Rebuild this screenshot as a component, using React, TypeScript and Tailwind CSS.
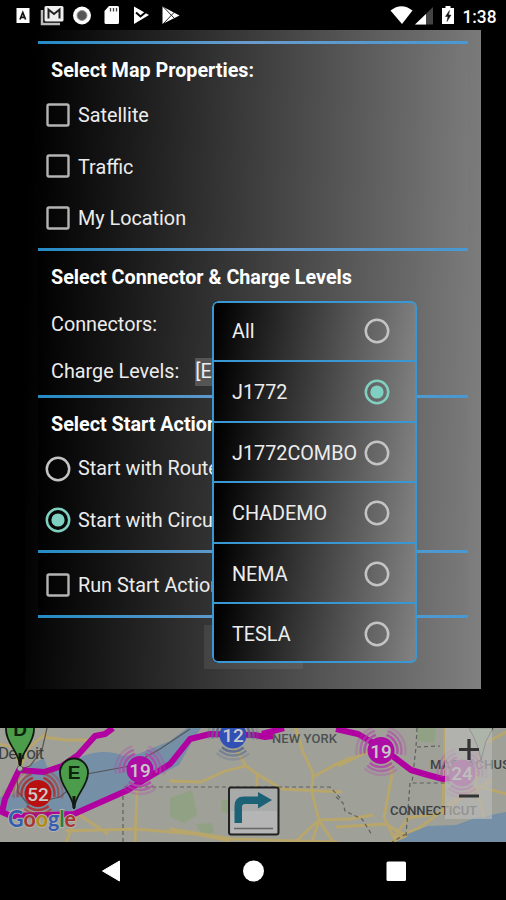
import { useState } from "react";
import type { ReactNode } from "react";

const connectors = ["All", "J1772", "J1772COMBO", "CHADEMO", "NEMA", "TESLA"];

function StatusBar() {
  return (
    <div className="flex h-[30px] shrink-0 bg-black">
      <svg width="506" height="30" viewBox="0 0 506 30">
        <rect x="16.500" y="8" width="13" height="15" fill="#fff" />
        <path d="M20 19.500l2.800-7 2.800 7M21.200 17.300h3.200" fill="none" stroke="#111" strokeWidth="1.700" />
        <path d="M42 10v14h18" fill="none" stroke="#bbb" strokeWidth="2.500" />
        <rect x="44.500" y="6" width="19" height="15.500" rx="1.500" fill="#eee" />
        <path d="M48.500 18.500V9.500l5.500 4.500 5.500-4.500v9" fill="none" stroke="#222" strokeWidth="2" />
        <circle cx="82" cy="15.500" r="9" fill="#fff" />
        <circle cx="82" cy="15.500" r="5" fill="#555" stroke="#999" />
        <path d="M109 6h8.500a1.500 1.500 0 0 1 1.500 1.500v15a1.500 1.500 0 0 1-1.500 1.500h-11.500a1.500 1.500 0 0 1-1.500-1.500V11z" fill="#fff" />
        <path d="M110.500 8v3.500M113.500 8v3.500M116.500 8v3.500" stroke="#444" strokeWidth="1.300" />
        <path d="M134 6.500l15 8.500-15 9z" fill="#fff" />
        <path d="M136 12.500l4.500 4L149 9.500" fill="none" stroke="#000" strokeWidth="2" />
        <path d="M162.500 6.500L179.500 15.500l-17 8.500z" fill="#fff" />
        <path d="M163 6.500l11.500 12M163 24l11.500-12" stroke="#222" strokeWidth="1" />
        <path d="M390.500 10.500q11-8.500 22 0L402 24z" fill="#fff" />
        <path d="M433 7v17.500h-18z" fill="#444" />
        <path d="M426 14v10.500h-11z" fill="#fff" />
        <path d="M445.500 6h5v2h3.500v16h-12V8h3.500z" fill="#fff" />
        <path d="M449.500 10.500l-4 6h2.500l-1 5 4-6.500h-2.500z" fill="#111" stroke="#111" strokeWidth=".5" />
        <text x="462.500" y="22.500" fill="#fff" fontFamily="Roboto" fontWeight="500" fontSize="19" textLength="34" lengthAdjust="spacingAndGlyphs">1:38</text>
      </svg>
    </div>
  );
}

function Divider() {
  return <div className="h-[3px] shrink-0 bg-[linear-gradient(90deg,#258bc5,#6a9bcb_50%,#4798d2)]" />;
}

function Radio({ on }: { on: boolean }) {
  return (
    <svg width="26" height="26" viewBox="0 0 26 26" className="shrink-0">
      <circle cx="13" cy="13" r="11.200" fill="none" stroke={on ? "#7fd0c0" : "#c4c4c4"} strokeWidth="2.500" />
      {on && <circle cx="13" cy="13" r="6.600" fill="#7fd0c0" />}
    </svg>
  );
}

function Check({ label }: { label: string }) {
  const [on, setOn] = useState(false);
  return (
    <button type="button" onClick={() => setOn(!on)} className="flex h-[51.500px] items-center pl-2 text-left">
      <svg width="24" height="24" viewBox="0 0 24 24" className="shrink-0">
        <rect x="1.500" y="1.500" width="21" height="21" rx="1.500" fill={on ? "#7fd0c0" : "none"} stroke="#b4b4b4" strokeWidth="2.400" />
      </svg>
      <span className="mt-[3px] ml-2 whitespace-nowrap">{label}</span>
    </button>
  );
}

function Section({ className, children }: { className: string; children?: ReactNode }) {
  return <div className={`flex shrink-0 flex-col bg-[linear-gradient(92deg,#000,#7a7a7a)] ${className}`}>{children}</div>;
}

function Title({ children }: { children: ReactNode }) {
  return <h2 className="pl-[13px] text-[19.750px] leading-6 font-bold text-white">{children}</h2>;
}

function ConnectorMenu({ value, onPick }: { value: string; onPick: (v: string) => void }) {
  return (
    <div className="absolute top-[271px] left-[187px] flex h-[362px] w-[205px] flex-col overflow-hidden rounded-[6px] after:pointer-events-none after:absolute after:inset-0 after:rounded-[6px] after:border-[2px] after:border-[#3998d3]">
      {connectors.map((c) => (
        <button
          key={c}
          type="button"
          onClick={() => onPick(c)}
          className="flex h-[60.500px] shrink-0 items-center justify-between border-b-[2px] border-[#3998d3] bg-[linear-gradient(100deg,#000_3%,#808080_97%)] pt-px pr-[27px] pl-5 whitespace-nowrap first:h-[61.250px] last:border-transparent"
        >
          <span className="mt-[2px]">{c}</span>
          <Radio on={value === c} />
        </button>
      ))}
    </div>
  );
}

type ClusterProps = { x: number; y: number; n: number; fill: string; ring: string };

function Cluster({ x, y, n, fill, ring }: ClusterProps) {
  return (
    <g>
      {[16.500, 20.500, 24.500].map((r, i) => (
        <circle
          key={r}
          cx={x}
          cy={y}
          r={r}
          fill="none"
          stroke={ring}
          strokeWidth="2.400"
          strokeOpacity={0.9 - i * 0.3}
          strokeDasharray="23 10.333"
          strokeDashoffset="-13.700"
          pathLength="100"
        />
      ))}
      <circle cx={x} cy={y} r="13.500" fill={fill} />
      <text x={x} y={y + 7} textAnchor="middle" fontSize="19" fontWeight="500" fill="#c8c8c8">{n}</text>
    </g>
  );
}

function Pin({ x, y, label }: { x: number; y: number; label: string }) {
  return (
    <g transform={`translate(${x} ${y})`}>
      <path d="M0 0C-1-15-14-22-14-36.500a14 14 0 0 1 28 0C14-22 1-15 0 0z" fill="#4c9d4b" stroke="#101a10" strokeWidth="1.800" />
      <path d="M0-1V-13" stroke="#101a10" strokeWidth="3" />
      <text y="-30" textAnchor="middle" fontSize="19" fontWeight="700" fill="#0c240c" fontFamily="Liberation Sans">{label}</text>
    </g>
  );
}

function MapView() {
  return (
    <svg width="506" height="114" viewBox="0 728 506 114" className="shrink-0" fontFamily="Roboto">
      <rect y="728" width="506" height="114" fill="#9fa198" />
      <g fill="#91a284">
        <path d="M2 790l22-5 12 10-14 14-22-4zM170 798l22-8 5 25-13 8-14-6zM196 824l16-1 2 10-12 2zM418 728h18l-2 15-17-2zM222 800h8l-1 14-8-3z" />
      </g>
      <g fill="#758fa6">
        <path d="M32 764l12-6 4 12h20l12-12c12-7 30-8 44-2l14-2 32-13 17-13h14l-8 12-14 25-40 20-55 24-20 3-40-4-22 4-6-14 18-4z" />
        <path d="M506 812l-31 6-19 7-28 1-22 8-15 8h115z" />
      </g>
      <g fill="none" stroke="#b9a66b" strokeWidth="2.800" strokeLinejoin="round">
        <path d="M0 744l26 6 22-18M28 750l-8 18M8 728l12 39M78 814l-12 28M65 831l70-2 60 5 35 7M135 842l2-52M42 737l25 3 26 0M78 814l30 20" />
        <path d="M170 781l31 1 24-11 21-5 11 8 0 15M235 748l11 18M257 774l25 15 60 3M296 728l7 24 10 21-1 20 7 27-7 22M313 777l25-14 15-6M319 820l30-1 24-4M319 820l-24 22M303 752l-8-24M338 766l46-22M170 829l62 10 105 3M319 820l14 22" />
        <path d="M336 827l50-3 20 12-15 6M392 775l-8 42 10 21 25-10 27-20 46-28M384 742l8 33M394 838l14-20 38-6M445 728l-2 84M473 728l8 16-5 42 8 32M484 744l22-12M481 787l25 7M459 818l-10-14 27-18" />
      </g>
      <g fill="none" stroke="#555" strokeWidth="1.200">
        <path d="M47 728l-5 22-12 16-9 3-4 8 1 15 10 12 32-7 27-23 43-8 30-17 30-20" />
        <path d="M123 842v-55H330l12 13M417 728l-1 19-4 36h38M410 783l-4 53M406 834l-14 8M417 747l23-1M336 797l7 6 2 8 17 8 10 16" strokeDasharray="4 3" strokeOpacity=".85" />
      </g>
      <g fill="none" stroke="#b101a0" strokeWidth="6" strokeLinejoin="round">
        <path d="M113 728l-8 6-10 2-17 19-16 11-18 6-25-2-14 29-3 13 9 4 63-2 54-24 42-26 20-25 20-5 45 1 10 2 8-1" />
        <path d="M262 734l22-6M336 729l22 5 24 14 29 22 17 5 15 4 17-2" />
      </g>
      <circle cx="20" cy="768.500" r="2.800" fill="#aaa" stroke="#555" />
      <g fill="#3c4042">
        <text x="-2" y="759" fontSize="17" textLength="46">Detroit</text>
        <g fontWeight="500" fontSize="13">
          <text x="272" y="742.500" textLength="65" fill="#4d5153">NEW YORK</text>
          <text x="430" y="768.500" textLength="80">MASSACHUS</text>
          <text x="390" y="814.500" textLength="87">CONNECTICUT</text>
        </g>
      </g>
      <Pin x={20} y={766} label="D" />
      <Cluster x={38} y={793.500} n={52} fill="#b91010" ring="#a83232" />
      <Pin x={74} y={809} label="E" />
      <Cluster x={140} y={769.500} n={19} fill="#ad0da5" ring="#b048aa" />
      <Cluster x={233} y={735} n={12} fill="#3050b5" ring="#5c6c8c" />
      <Cluster x={381} y={750.500} n={19} fill="#ad0da5" ring="#b048aa" />
      <Cluster x={462} y={773} n={24} fill="#b040a8" ring="#b048aa" />
      <path d="M493 728l-7 13-5 19q-2-14-12-32z" fill="#91a98b" stroke="#444" />
      <text x="8" y="827" fontSize="23" fontWeight="700" fontFamily="Lato" textLength="68" lengthAdjust="spacingAndGlyphs" stroke="#b4b4b4" strokeWidth="1.800" paintOrder="stroke">
        <tspan fill="#355fae">G</tspan>
        <tspan fill="#a93731">o</tspan>
        <tspan fill="#b08b17">o</tspan>
        <tspan fill="#355fae">g</tspan>
        <tspan fill="#24803d">l</tspan>
        <tspan fill="#a93731">e</tspan>
      </text>
      <rect x="229" y="787.500" width="49.500" height="47" rx="2" fill="#a9aaaa" stroke="#222" strokeWidth="2" />
      <path d="M231 811h46v22h-46z" fill="#b5b5b5" />
      <path d="M234.500 823v-17q0-9.500 9.500-9.500h14V792l14 8-14 8.500v-4.500h-13q-3 0-3 3v16z" fill="#1c6277" />
      <path d="M234 828.500h39" stroke="#666" strokeWidth="1.500" />
      <rect x="445" y="728" width="47" height="91" fill="#b9bab8" fillOpacity=".68" />
      <path d="M459 749.500h20M469 739v21M459 796h20" stroke="#333" strokeWidth="3.200" />
    </svg>
  );
}

function NavBar() {
  return (
    <div className="flex h-[58px] shrink-0 bg-black">
      <svg width="506" height="58" viewBox="0 0 506 58" fill="#fff">
        <path d="M102.500 29L119.500 19v20z" stroke="#fff" strokeLinejoin="round" />
        <circle cx="253.500" cy="29" r="10.500" />
        <rect x="386.500" y="19.500" width="19.500" height="19.500" rx="1.500" />
      </svg>
    </div>
  );
}

export default function App() {
  const [connector, setConnector] = useState("J1772");
  const [action, setAction] = useState("Start with Circuit");

  return (
    <div className="flex h-[900px] w-[506px] flex-col overflow-hidden bg-black font-['Roboto',sans-serif] text-[19.800px] leading-6 text-[#ececec]">
      <StatusBar />
      <div className="relative mr-[25px] mb-[39px] ml-[25px] flex h-[659px] shrink-0 flex-col bg-[linear-gradient(92deg,#000_2%,#808080)] px-[13px] pt-[11px]">
        <Divider />
        <Section className="h-[204px] pt-[15px]">
          <Title>Select Map Properties:</Title>
          <div className="mt-[6px] flex flex-col">
            <Check label="Satellite" />
            <Check label="Traffic" />
            <Check label="My Location" />
          </div>
        </Section>
        <Divider />
        <Section className="h-[144px] pt-[15px]">
          <Title>Select Connector &amp; Charge Levels</Title>
          <div className="mt-[23px] pl-[13px]">Connectors:</div>
          <div className="mt-[21px] flex items-center pl-[13px]">
            <span>Charge Levels:</span>
            <span className="ml-4 h-[28px] w-[120px] bg-[#555] leading-[28px]">[Empty]</span>
          </div>
        </Section>
        <Divider />
        <Section className="h-[152px] pt-[15px]">
          <Title>Select Start Action:</Title>
          <div className="mt-[6px] flex flex-col">
            {["Start with Route", "Start with Circuit"].map((a) => (
              <button key={a} type="button" onClick={() => setAction(a)} className="flex h-[51.500px] items-center pl-[7px] whitespace-nowrap">
                <Radio on={action === a} />
                <span className="mt-px ml-[7px]">{a}</span>
              </button>
            ))}
          </div>
        </Section>
        <Divider />
        <Section className="h-[62px] pt-[6px]">
          <Check label="Run Start Action" />
        </Section>
        <Divider />
        <div className="mt-[7px] ml-[166px] h-[44px] w-[99px] bg-white/8" />
        <ConnectorMenu value={connector} onPick={setConnector} />
      </div>
      <MapView />
      <NavBar />
    </div>
  );
}
